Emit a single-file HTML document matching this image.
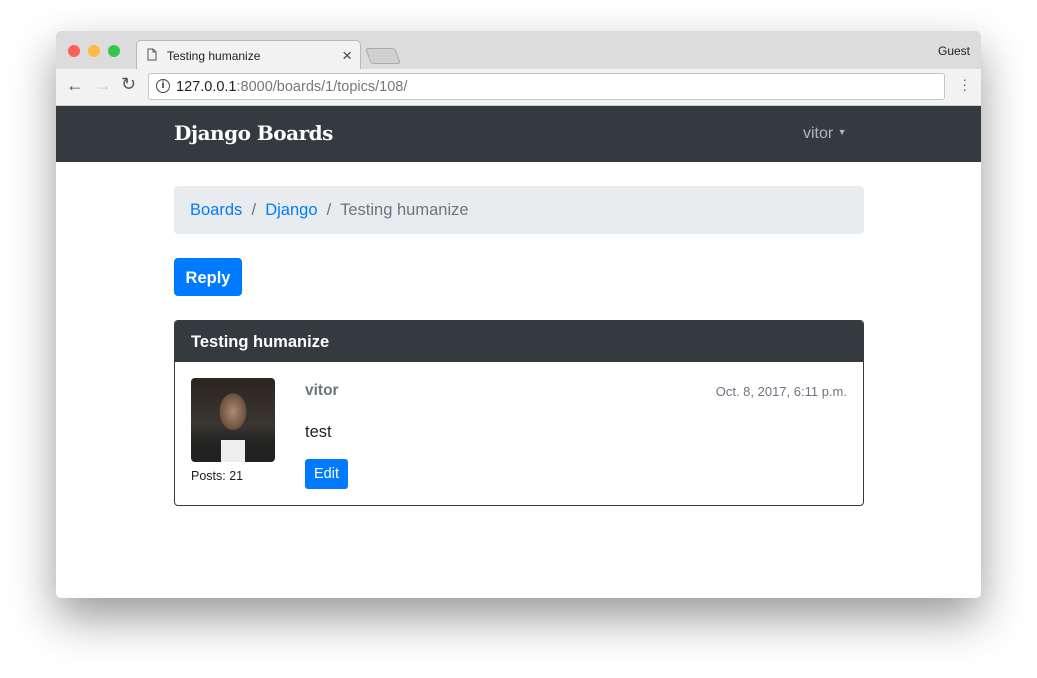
<!DOCTYPE html>
<html><head><style>
*{box-sizing:border-box;margin:0;padding:0}
body{width:1037px;height:678px;background:#fff;font-family:"Liberation Sans",sans-serif;position:relative;overflow:hidden}
.win{position:absolute;left:56px;top:31px;width:925px;height:567px;background:#fff;box-shadow:0 20px 45px rgba(0,0,0,.4);border-radius:5px;overflow:hidden}
.tabbar{height:38px;background:#dcdcdc;position:relative}
.dot{position:absolute;top:14px;width:12px;height:12px;border-radius:50%}
.tab{position:absolute;left:80px;top:9px;width:225px;height:30px;background:#f2f2f2;border:1px solid #b8b8b8;border-bottom:none;border-radius:5px 5px 0 0;font-size:12px;padding:8px 0 0 30px;color:#222}
.toolbar{height:37px;background:#f2f2f2;border-bottom:1px solid #c8c8c8;position:relative}
.url{position:absolute;left:92px;top:4px;width:797px;height:27px;background:#fff;border:1px solid #c5c5c5;border-radius:3px;font-size:14.5px;padding:5px 0 0 27px;color:#222}
.nav{height:56px;background:#343a40;position:relative}
.content{position:relative}
</style></head><body>
<div class="win">
<div class="tabbar">
<div class="dot" style="left:12px;background:#fc605b"></div>
<div class="dot" style="left:32px;background:#fdbc40"></div>
<div class="dot" style="left:52px;background:#34c84a"></div>
<div class="tab">Testing humanize<span style="position:absolute;right:8px;top:5px;font-size:17px;color:#444">×</span>
<svg style="position:absolute;left:10px;top:7px" width="10" height="13"><path d="M1 1h5l3 3v8H1z M6 1v3h3" fill="none" stroke="#555"/></svg></div>
<div style="position:absolute;left:312px;top:17px;width:30px;height:16px;background:#d0d0d0;border:1px solid #aaa;border-radius:3px;transform:skewX(20deg)"></div>
<div style="position:absolute;right:11px;top:13px;font-size:12px;color:#222">Guest</div>
</div>
<div class="toolbar">
<div style="position:absolute;left:10px;top:6px;font-size:18px;color:#555">←</div>
<div style="position:absolute;left:38px;top:6px;font-size:18px;color:#ccc">→</div>
<div style="position:absolute;left:65px;top:5px;font-size:18px;color:#555">↻</div>
<div class="url"><span style="position:absolute;left:7px;top:5px;width:14px;height:14px;border:1.5px solid #444;border-radius:50%;font-size:10px;text-align:center;line-height:11px;font-weight:bold">i</span>127.0.0.1<span style="color:#777">:8000/boards/1/topics/108/</span></div>
<div style="position:absolute;right:14px;top:8px;font-size:14px;color:#555;line-height:5px">·<br>·<br>·</div>
</div>
<div class="nav">
<div style="position:absolute;left:118px;top:15px;font-family:'DejaVu Serif',serif;font-weight:bold;font-size:20px;letter-spacing:-0.5px;color:#fff">Django Boards</div>
<div style="position:absolute;left:747px;top:19px;font-size:16px;color:#adb5bd">vitor <span style="font-size:9px;vertical-align:3px">▼</span></div>
</div>
<div class="content">
<div style="position:absolute;left:118px;top:24px;width:690px;height:48px;background:#e9ecef;border-radius:4px;font-size:16.5px;padding:15px 16px;color:#6c757d"><span style="color:#007bff">Boards</span> &nbsp;/&nbsp; <span style="color:#007bff">Django</span> &nbsp;/&nbsp; Testing humanize</div>
<div style="position:absolute;left:118px;top:96px;width:68px;height:38px;background:#007bff;border-radius:4px;color:#fff;font-size:16.5px;text-align:center;line-height:40px;font-weight:bold">Reply</div>
<div style="position:absolute;left:118px;top:158px;width:690px;height:186px;border:1px solid #343a40;border-radius:4px;overflow:hidden">
<div style="height:41px;background:#343a40;color:#fff;font-size:16.5px;font-weight:bold;padding:12px 16px">Testing humanize</div>
<div style="position:absolute;left:16px;top:57px;width:84px;height:84px;border-radius:4px;background:radial-gradient(ellipse 22px 30px at 50% 40%,#b08a70,#6a5040 60%,transparent 62%),linear-gradient(#2a2520,#3a3530 55%,#222 80%);overflow:hidden"><div style="position:absolute;left:30px;top:62px;width:24px;height:22px;background:#eee"></div></div>
<div style="position:absolute;left:16px;top:148px;font-size:12.5px;color:#222">Posts: 21</div>
<div style="position:absolute;left:130px;top:61px;font-size:15.5px;font-weight:bold;color:#6c757d">vitor</div>
<div style="position:absolute;right:16px;top:63px;font-size:13px;color:#6c757d">Oct. 8, 2017, 6:11 p.m.</div>
<div style="position:absolute;left:130px;top:102px;font-size:16.5px;color:#222">test</div>
<div style="position:absolute;left:130px;top:138px;width:43px;height:30px;background:#007bff;border-radius:3px;color:#fff;font-size:14.5px;text-align:center;line-height:31px">Edit</div>
</div>
</div>
</div>
</body></html>
